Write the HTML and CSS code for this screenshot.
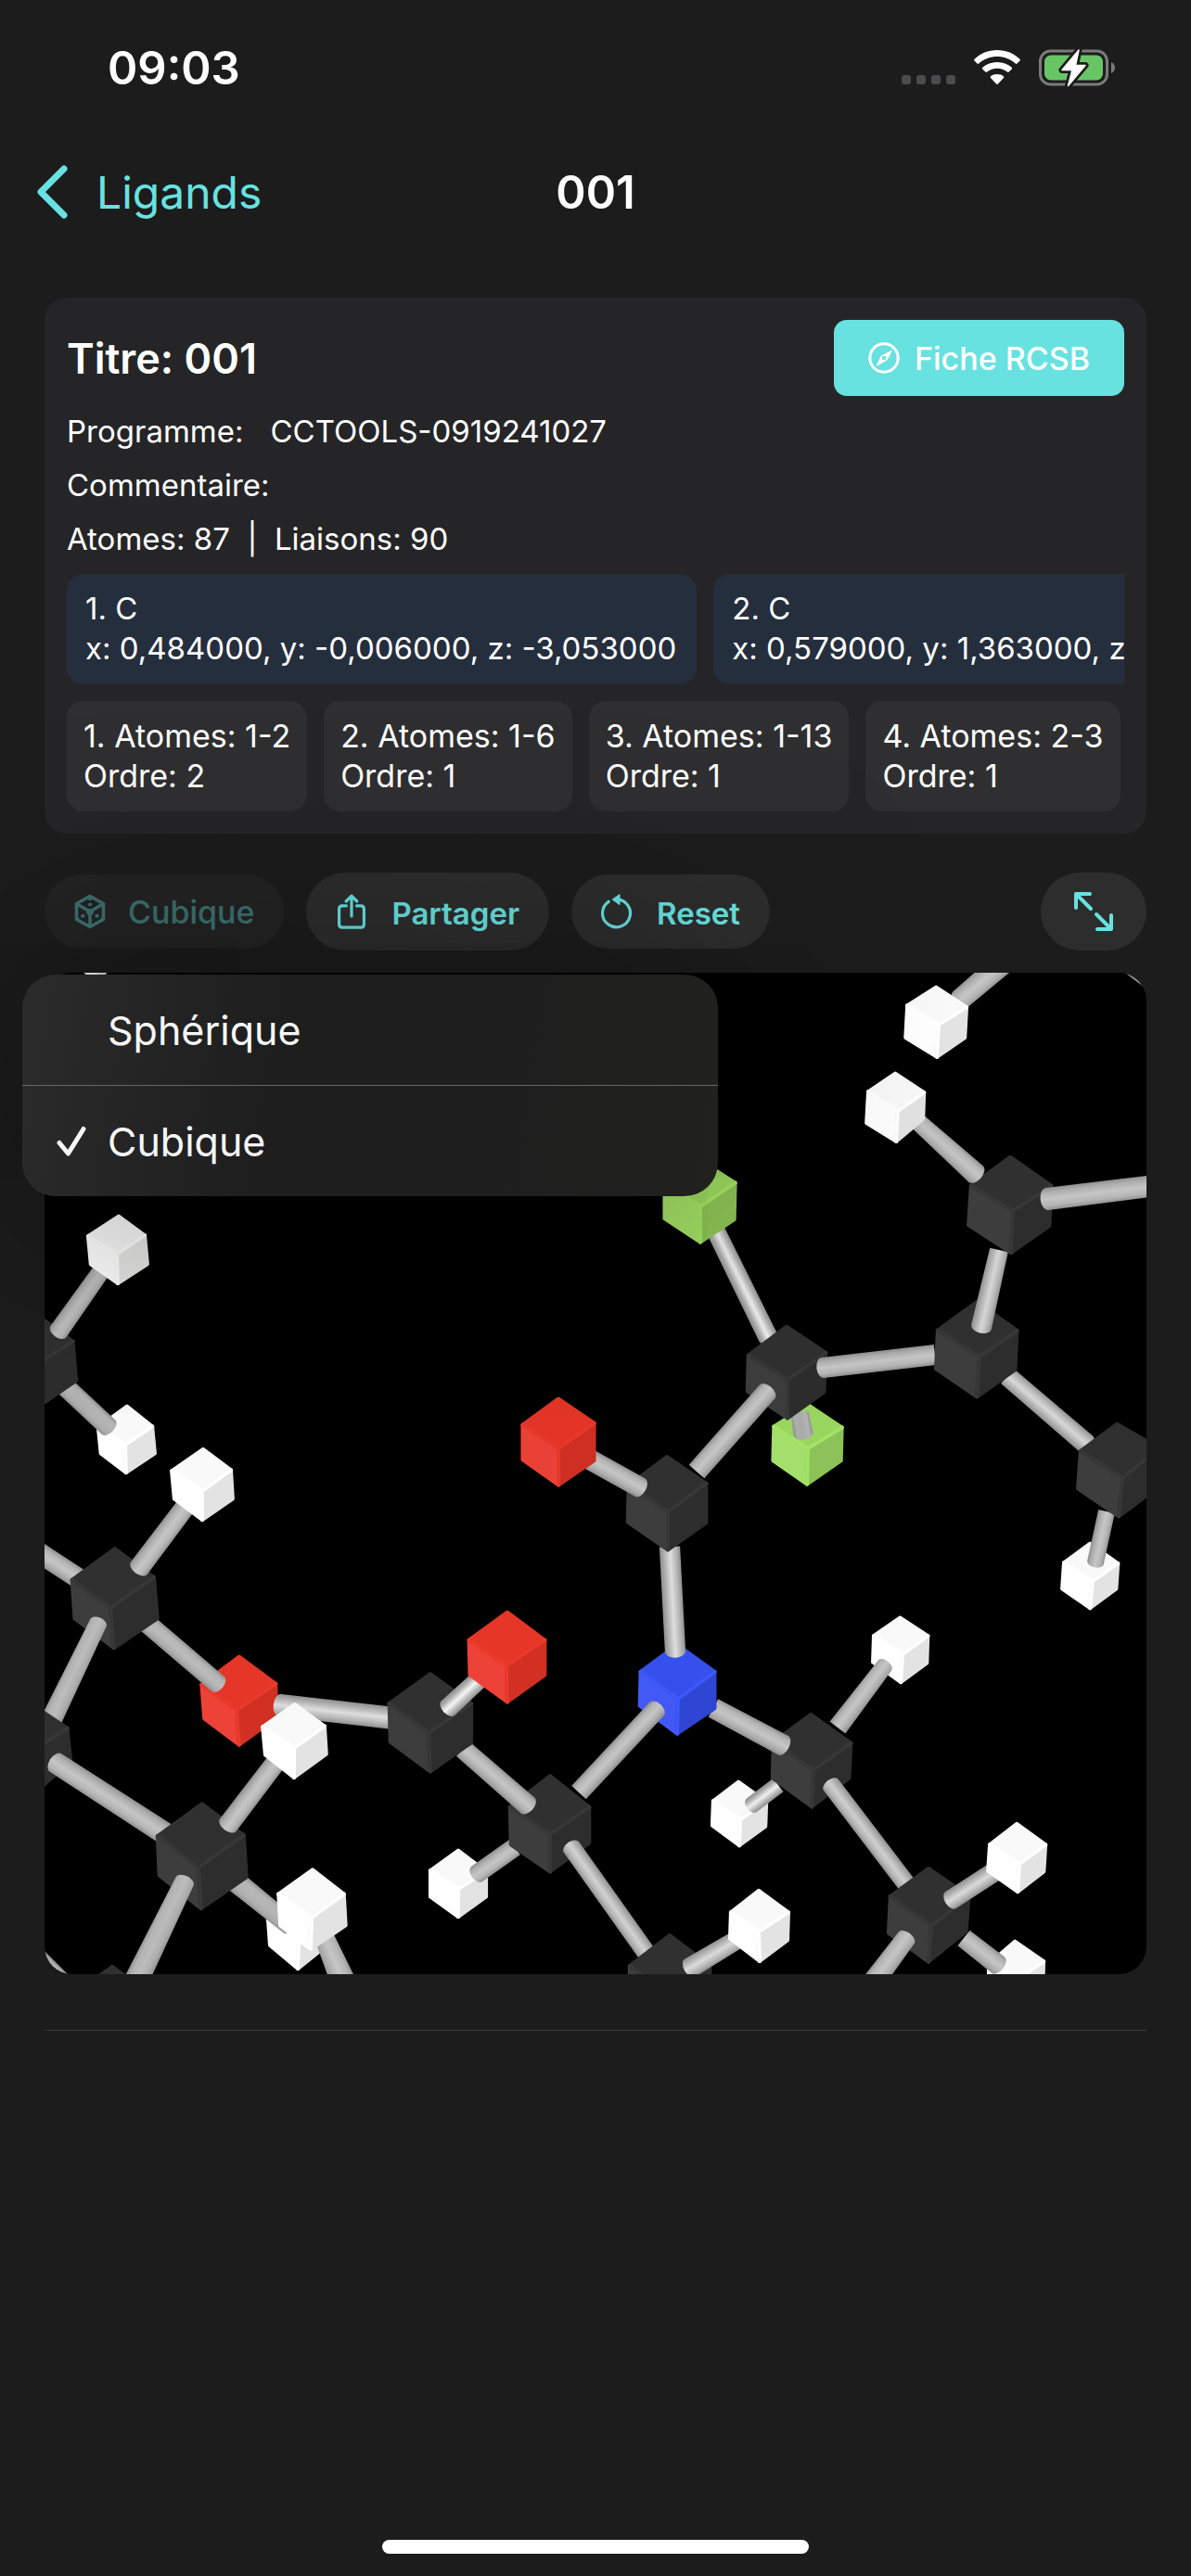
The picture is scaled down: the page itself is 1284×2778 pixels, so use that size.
FILE: index.html
```
<!DOCTYPE html>
<html lang="fr">
<head>
<meta charset="utf-8">
<meta name="viewport" content="width=device-width, initial-scale=1">
<title>001 – Ligands</title>
<link rel="stylesheet" href="styles.css">
</head>
<body>
<div class="status">
  <time class="status__time">09:03</time>
  <div class="status__icons">
    <svg class="status__signal" viewBox="0 0 58 10" aria-hidden="true" fill="#4c4c4e"><rect width="10" height="10" rx="3"/><rect x="16" width="10" height="10" rx="3"/><rect x="32" width="10" height="10" rx="3"/><rect x="48" width="10" height="10" rx="3"/></svg>
    <svg class="status__wifi" viewBox="0 0 50 38" aria-hidden="true" fill="#fff"><path d="M25 0C34.500 0 43.500 3.700 49.500 9.800Q50.300 10.700 49.500 11.500L46.500 14.500Q45.700 15.300 44.800 14.500C39.300 9.600 32.400 7 25 7S10.700 9.600 5.200 14.500Q4.300 15.300 3.500 14.500L.5 11.500Q-.3 10.700.5 9.800C6.500 3.700 15.500 0 25 0Z"/><path d="M25 13C31 13 36.500 15.200 40.700 18.800Q41.600 19.700 40.800 20.500L37.600 23.600Q36.800 24.400 35.900 23.600C32.900 21.100 29.100 19.800 25 19.800S17.100 21.100 14.100 23.600Q13.200 24.400 12.400 23.600L9.200 20.500Q8.400 19.700 9.300 18.800C13.500 15.200 19 13 25 13Z"/><path d="M25 26C27.700 26 30.100 26.900 31.900 28.300Q32.800 29.200 32 30L25.900 36.500Q25 37.400 24.100 36.500L18 30Q17.200 29.200 18.100 28.300C19.900 26.900 22.300 26 25 26Z"/></svg>
    <svg class="status__battery" viewBox="0 0 82 42" aria-hidden="true"><rect x="1.500" y="3" width="72" height="36" rx="11" fill="none" stroke="#7b7b7d" stroke-width="3"/><path d="M78 15Q82 17 82 21T78 27Z" fill="#7b7b7d"/><rect x="6" y="7.500" width="63" height="27" rx="7" fill="#67c566"/><path d="M43 2L25 23.500H36L31.500 40.500L50 18.500H39.500Z" fill="#fff" stroke="#1c1c1c" stroke-width="7" stroke-linejoin="round"/><path d="M43 2L25 23.500H36L31.500 40.500L50 18.500H39.500Z" fill="#fff" stroke="#fff" stroke-width="1.500" stroke-linejoin="round"/></svg>
  </div>
</div>

<header class="nav">
  <a class="nav__back" href="#ligands">
    <svg class="nav__chevron" viewBox="0 0 34 58" aria-hidden="true"><path d="M29 4L4 29L29 54" fill="none" stroke="currentColor" stroke-width="7" stroke-linecap="round" stroke-linejoin="round"/></svg>
    Ligands
  </a>
  <h1 class="nav__title">001</h1>
</header>

<main class="content">
  <section class="card">
    <div class="card__head">
      <h2 class="card__title">Titre: 001</h2>
      <button class="sheet-button" type="button">
        <svg class="sheet-button__icon" viewBox="0 0 34 34" aria-hidden="true"><circle cx="17" cy="17" r="15.200" fill="none" stroke="currentColor" stroke-width="3"/><path fill="currentColor" fill-rule="evenodd" d="M25.300 8.700Q26 8.400 25.600 9.400L21 18.500Q20.500 19.400 19.500 20L9.800 25.500Q8.700 25.900 9.100 24.800L13.300 15.800Q13.800 14.800 14.800 14.200ZM17 14.800A2.200 2.200 0 1 0 17 19.200A2.200 2.200 0 1 0 17 14.800Z"/></svg>
        Fiche RCSB
      </button>
    </div>
    <p class="card__row"><span>Programme:</span><span>CCTOOLS-0919241027</span></p>
    <p class="card__row">Commentaire:</p>
    <p class="card__row">Atomes: 87&nbsp; |&nbsp; Liaisons: 90</p>
    <ul class="chips chips--atoms">
      <li class="chip">1. C<br>x: 0,484000, y: -0,006000, z: -3,053000</li>
      <li class="chip">2. C<br>x: 0,579000, y: 1,363000, z: -2,410000</li>
    </ul>
    <ul class="chips chips--bonds">
      <li class="chip">1. Atomes: 1-2<br>Ordre: 2</li>
      <li class="chip">2. Atomes: 1-6<br>Ordre: 1</li>
      <li class="chip">3. Atomes: 1-13<br>Ordre: 1</li>
      <li class="chip">4. Atomes: 2-3<br>Ordre: 1</li>
    </ul>
  </section>

  <div class="toolbar">
    <button class="pill pill--open" type="button" aria-haspopup="menu" aria-expanded="true">
      <svg class="pill__icon" viewBox="0 0 34 38" aria-hidden="true" fill="none" stroke="currentColor" stroke-width="3.600" stroke-linejoin="round"><path d="M17 2.500L31.500 10.500V27.500L17 35.500L2.500 27.500V10.500Z"/><path d="M3 11L17 19L31 11M17 19V35"/><path d="M17 4V19" stroke-dasharray="3 3"/><path d="M17 19L4 27M17 19L30 27" stroke-dasharray="4 3"/></svg>
      <span>Cubique</span>
    </button>
    <button class="pill pill--strong pill--tall" type="button">
      <svg class="pill__icon" viewBox="0 0 34 38" aria-hidden="true" fill="none" stroke="currentColor" stroke-width="3.200" stroke-linecap="round" stroke-linejoin="round"><path d="M11.500 12.800H7Q3.600 12.800 3.600 16.200V32.800Q3.600 36.200 7 36.200H27Q30.400 36.200 30.400 32.800V16.200Q30.400 12.800 27 12.800H22.500"/><path d="M17 24V2.500M11.200 8L17 2.200L22.800 8"/></svg>
      <span class="pill__label">Partager</span>
    </button>
    <button class="pill pill--strong" type="button">
      <svg class="pill__icon" viewBox="0 0 34 38" aria-hidden="true"><path d="M8.200 8.300A15 15 0 1 0 17 5.800" fill="none" stroke="currentColor" stroke-width="3.200" stroke-linecap="round"/><path d="M19.800 1V11.200L12.600 6Z" fill="currentColor" stroke="currentColor" stroke-width="1.500" stroke-linejoin="round"/></svg>
      <span class="pill__label">Reset</span>
    </button>
    <button class="pill pill--tall pill--end" type="button" aria-label="Plein écran">
      <svg class="pill__expand" viewBox="0 0 44 44" aria-hidden="true" fill="none" stroke="currentColor" stroke-width="4" stroke-linecap="round" stroke-linejoin="round"><path d="M3 18V3H18M3.500 3.500L19 19M41 26V41H26M40.500 40.500L25 25"/></svg>
    </button>
  </div>

  <div class="viewer">
    <svg class="viewer__scene" id="scene" viewBox="48 1049 1188 1080" role="img" aria-label="Molécule 001 en représentation cubique"></svg>
    <div class="menu" role="menu">
      <button class="menu__item" type="button" role="menuitemradio" aria-checked="false"><span class="menu__check"></span>Sphérique</button>
      <button class="menu__item" type="button" role="menuitemradio" aria-checked="true"><span class="menu__check"><svg class="menu__tick" viewBox="0 0 32 34" aria-hidden="true"><path d="M3 18.500L12.500 30L29 3.500" fill="none" stroke="currentColor" stroke-width="5" stroke-linecap="round" stroke-linejoin="round"/></svg></span>Cubique</button>
    </div>
  </div>

  <hr class="rule">
</main>
<div class="home-indicator"></div>
<script src="molecule.js"></script>
</body>
</html>
```
FILE: styles.css
```
* { box-sizing: border-box; }

body {
  margin: 0;
  min-height: 100vh;
  display: flex;
  flex-direction: column;
  background: #1c1c1c;
  color: #fff;
  font-family: Inter, "Liberation Sans", sans-serif;
  font-size: 33px;
  overflow-x: hidden;
}

h1, h2, p, ul { margin: 0; padding: 0; }
ul { list-style: none; }
svg { display: block; flex: none; }
button { margin: 0; padding: 0; border: 0; font: inherit; color: inherit; background: none; }

.status {
  height: 146px;
  padding: 0 82px 0 116px;
  display: flex;
  align-items: center;
  justify-content: space-between;
}
.status__time { font-size: 49px; font-weight: 600; }
.status__icons { display: flex; align-items: center; gap: 20px; }
.status__signal { width: 58px; height: 10px; margin-top: 26px; }
.status__wifi { width: 50px; height: 38px; }
.status__battery { width: 82px; height: 42px; }

.nav {
  height: 122px;
  padding: 0 40px;
  display: grid;
  grid-template-columns: 1fr auto 1fr;
  align-items: center;
}
.nav__back {
  display: flex;
  align-items: center;
  gap: 30px;
  color: #68e2e0;
  font-size: 48px;
  text-decoration: none;
}
.nav__chevron { width: 34px; height: 58px; }
.nav__title { font-size: 49px; font-weight: 600; }

.content {
  padding: 53px 48px 0;
  display: flex;
  flex-direction: column;
}

.card {
  padding: 24px;
  border-radius: 24px;
  background: #252527;
  display: flex;
  flex-direction: column;
  gap: 18px;
}
.card__head { display: flex; align-items: center; justify-content: space-between; }
.card__title { font-size: 45px; font-weight: 600; }
.card__row { display: flex; gap: 29px; line-height: 40px; }

.sheet-button {
  height: 82px;
  padding: 0 37px;
  border-radius: 14px;
  display: flex;
  align-items: center;
  gap: 16px;
  background: #68e2e0;
  font-size: 34px;
  font-weight: 500;
}
.sheet-button__icon { width: 34px; height: 34px; }

.chips { display: flex; gap: 18px; overflow-x: auto; scrollbar-width: none; }
.chip {
  flex: none;
  padding: 16px 18px 17px;
  border-radius: 18px;
  line-height: 43px;
  white-space: nowrap;
}
.chips--atoms .chip { padding-left: 20px; padding-right: 22px; background: #252e3d; }
.chips--bonds .chip { background: #2f2f31; font-size: 34px; }

.toolbar {
  margin: 42px 0 24px;
  display: flex;
  align-items: center;
  gap: 24px;
}
.pill {
  height: 80px;
  padding: 0 32px;
  border-radius: 42px;
  display: flex;
  align-items: center;
  gap: 24px;
  background: #2d2d2e;
  color: #68e2e0;
  font-size: 34px;
  font-weight: 500;
}
.pill--open { opacity: .42; }
.pill--strong { gap: 26px; font-size: 33px; font-weight: 600; }
.pill--tall { height: 84px; }
.pill--end { margin-left: auto; padding: 0 35px; }
.pill__icon { width: 34px; height: 38px; }
.pill__label { padding-top: 4px; }
.pill__expand { width: 44px; height: 44px; }

.viewer { position: relative; }
.viewer__scene {
  width: 100%;
  height: auto;
  border-radius: 30px;
  background: #000;
}

.menu {
  position: absolute;
  top: 2px;
  left: -24px;
  width: 750px;
  border-radius: 36px;
  background: linear-gradient(100deg, #2b2b2b, #1e1e1e 36%, #1e1e1e 70%, #21211f);
  box-shadow: 0 0 240px rgba(0, 0, 0, .5);
}
.menu__item {
  width: 100%;
  height: 119px;
  padding-left: 34px;
  display: flex;
  align-items: center;
  color: #f7f7f7;
  font-size: 43px;
}
.menu__item + .menu__item { height: 120px; border-top: 1px solid #676767; }
.menu__check { width: 58px; padding-left: 3px; }
.menu__tick { width: 32px; height: 34px; }

.rule {
  width: 100%;
  height: 1px;
  margin: 60px 0 0;
  border: 0;
  background: #3a3a3b;
}

.home-indicator {
  width: 460px;
  height: 15px;
  margin: auto auto 24px;
  border-radius: 8px;
  background: #fff;
}
```
FILE: molecule.js
```
// Draws the ball-and-stick scene with cubes for atoms, from back to front.
const SVG = "http://www.w3.org/2000/svg";
const scene = document.getElementById("scene");

// Colours per element: top face, left face, right face, bevelled edge.
const SHADES = {
  H: ["#f9f9f9", "#fefefe", "#e3e3e3", "#ffffff"],
  h: ["#f9f9f9", "#ffffff", "#e3e3e3", "#ffffff"],
  d: ["#f9f9f9", "#ffffff", "#e6e6e4", "#ffffff"],
  C: ["#303030", "#3d3d3d", "#2d2d2d", "#373737"],
  O: ["#e63628", "#ed4238", "#d13023", "#e93a2c"],
  o: ["#e23527", "#ea4137", "#ce2f22", "#e6382a"],
  N: ["#3550ec", "#4259f5", "#2f45d3", "#3d58f8"],
  F: ["#99d65f", "#a3df6a", "#8cc258", "#a2e365"],
  f: ["#9ad75e", "#a4e067", "#8bc254", "#a2e363"]
};

// Radius of the drawn cylinders relative to the listed widths.
const THICKNESS = 1.06;

function add(name, attrs, parent = scene) {
  const node = document.createElementNS(SVG, name);
  for (const key in attrs) node.setAttribute(key, attrs[key]);
  parent.append(node);
  return node;
}

// Corners run clockwise from the top one; the last point is the near corner.
function cube(kind, ...p) {
  const [top, left, right, edge] = SHADES[kind];
  const at = i => p[2 * i] + " " + p[2 * i + 1];
  const cx = p[12], cy = p[13];
  const inset = i => (p[2 * i] + (cx - p[2 * i]) * 0.06) + " " + (p[2 * i + 1] + (cy - p[2 * i + 1]) * 0.06);
  const face = (fill, ids) => add("path", {
    d: "M" + ids.map(inset).join("L") + "L" + at(6) + "Z",
    fill, stroke: fill, "stroke-width": 4, "stroke-linejoin": "round"
  });
  face(top, [5, 0, 1]);
  face(left, [3, 4, 5]);
  face(right, [1, 2, 3]);
  add("path", {
    d: `M${inset(5)}L${at(6)}L${inset(1)}M${at(6)}L${inset(3)}`,
    fill: "none", stroke: edge, "stroke-width": 4, "stroke-linejoin": "round", "stroke-linecap": "round"
  });
}

const defs = add("defs", {});
let bondCount = 0;

// A cylinder from (x1, y1) to (x2, y2); the far end enters the front face of an atom.
function bond(x1, y1, w1, x2, y2, w2, peak = "#c6c6c6") {
  const len = Math.hypot(x2 - x1, y2 - y1);
  const ux = (x2 - x1) / len, uy = (y2 - y1) / len;
  const nx = -uy, ny = ux;
  const id = "bond" + bondCount++;
  const a = w1 * THICKNESS / 2, b = w2 * THICKNESS / 2;
  const w = Math.max(a, b);
  const grad = add("linearGradient", {
    id, gradientUnits: "userSpaceOnUse",
    x1: x1 + nx * w, y1: y1 + ny * w, x2: x1 - nx * w, y2: y1 - ny * w
  }, defs);
  [["0", "#8e8e8e"], [".2", "#adadad"], [".5", peak], [".8", "#b4b4b4"], ["1", "#8e8e8e"]]
    .forEach(([offset, color]) => add("stop", { offset, "stop-color": color }, grad));
  const angle = Math.atan2(uy, ux) * 180 / Math.PI;
  add("path", {
    d: `M${x1 + nx * a} ${y1 + ny * a}L${x2 + nx * b} ${y2 + ny * b}` +
       `A${b * 0.6} ${b} ${angle} 0 0 ${x2 - nx * b} ${y2 - ny * b}L${x1 - nx * a} ${y1 - ny * a}Z`,
    fill: `url(#${id})`
  });
}

// Upper right
bond(1103, 1020, 24, 1035, 1078, 22);
cube("h", 1009, 1062, 1044, 1085, 1042, 1120, 1010, 1142, 974, 1120, 976, 1083, 1012, 1105);
bond(1208, 1032, 20, 1258, 1070, 20);
bond(772, 1328, 19, 828, 1442, 20, "#f0f0f0");
bond(1086, 1484, 20, 1171, 1557, 21, "#d8d8d8");
cube("f", 754, 1248, 795, 1274, 794, 1316, 755, 1342, 714, 1315, 714, 1275, 755, 1301);
cube("F", 871, 1512, 910, 1538, 909, 1576, 870, 1603, 831, 1576, 832, 1537, 871, 1562);
bond(862, 1523, 18, 866, 1546, 20, "#aaaaaa");
cube("C", 848, 1427, 893, 1457, 891, 1502, 849, 1532, 803, 1501, 804, 1460, 849, 1488);
bond(1008, 1461, 21, 887, 1475, 21);
cube("C", 1053, 1400, 1099, 1433, 1097, 1478, 1053, 1509, 1006, 1477, 1008, 1433, 1056, 1463);
bond(1077, 1348, 19, 1058, 1431, 21, "#d6d6d6");
cube("C", 1089, 1244, 1136, 1277, 1134, 1323, 1090, 1354, 1041, 1322, 1044, 1277, 1092, 1306);
bond(1250, 1278, 22, 1129, 1293, 23);
bond(990, 1210, 18, 1052, 1266, 22);
cube("h", 965, 1155, 998, 1177, 997, 1207, 966, 1233, 932, 1212, 934, 1176, 968, 1198);
cube("H", 1175, 1662, 1207, 1685, 1205, 1714, 1175, 1736, 1143, 1714, 1145, 1684, 1178, 1705);
bond(1193, 1630, 17, 1181, 1685, 17);
cube("C", 1204, 1532, 1252, 1560, 1250, 1605, 1206, 1638, 1159, 1606, 1162, 1563, 1210, 1594);

// Centre and lower right
cube("H", 970, 1742, 1002, 1763, 1001, 1794, 971, 1816, 939, 1793, 940, 1763, 973, 1784);
bond(903, 1863, 20, 954, 1796, 17);
cube("H", 796, 1919, 828, 1942, 827, 1970, 797, 1992, 766, 1969, 767, 1941, 798, 1962);
bond(839, 1925, 17, 810, 1947, 17, "#f0f0f0");
cube("C", 874, 1845, 920, 1878, 918, 1918, 875, 1951, 830, 1918, 831, 1877, 877, 1909);
bond(769, 1842, 21, 844, 1882, 22);
cube("N", 730, 1770, 773, 1801, 773, 1843, 730, 1872, 687, 1840, 688, 1801, 731, 1832);
bond(624, 1933, 20, 708, 1843, 20);
bond(722, 1668, 21, 728, 1781, 21, "#dedede");
bond(751, 1587, 21, 827, 1501, 21);
cube("C", 719, 1567, 764, 1598, 764, 1643, 720, 1674, 674, 1642, 675, 1600, 720, 1630);
bond(636, 1574, 21, 690, 1604, 21);
cube("o", 602, 1505, 643, 1533, 643, 1576, 602, 1604, 561, 1575, 561, 1535, 602, 1562);
cube("H", 494, 1993, 526, 2017, 526, 2046, 494, 2069, 462, 2046, 462, 2016, 494, 2037);
bond(555, 1992, 19, 514, 2021, 19);
cube("C", 593, 1911, 638, 1947, 638, 1988, 593, 2021, 548, 1990, 547, 1947, 593, 1978);
cube("H", 1094, 2091, 1127, 2114, 1126, 2146, 1095, 2168, 1064, 2146, 1064, 2117, 1096, 2135);
bond(1039, 2090, 20, 1076, 2119, 21);
bond(979, 2034, 19, 896, 1925, 19, "#cfcfcf");
cube("C", 1001, 2011, 1047, 2043, 1044, 2083, 1001, 2118, 955, 2085, 957, 2043, 1004, 2077);
bond(930, 2153, 23, 977, 2090, 20);
bond(1073, 2018, 20, 1025, 2049, 20, "#dadada");
cube("H", 1096, 1964, 1129, 1988, 1127, 2019, 1097, 2042, 1063, 2018, 1065, 1988, 1099, 2010);
bond(699, 2109, 19, 616, 1992, 19, "#d2d2d2");
cube("C", 722, 2083, 768, 2118, 768, 2165, 722, 2195, 675, 2165, 676, 2118, 723, 2152);
bond(796, 2091, 19, 744, 2122, 21, "#dadada");
cube("H", 818, 2036, 852, 2061, 851, 2093, 819, 2117, 785, 2091, 786, 2061, 818, 2083);

// Left side
cube("O", 258, 1783, 300, 1814, 301, 1853, 258, 1884, 218, 1854, 215, 1815, 255, 1844);
bond(425, 1853, 23, 302, 1839, 23, "#dedede");
bond(499, 1886, 20, 569, 1947, 21);
cube("C", 464, 1801, 511, 1835, 511, 1880, 464, 1913, 418, 1879, 417, 1835, 462, 1869);
bond(522, 1806, 19, 483, 1842, 20, "#f6f6f6");
cube("O", 547, 1735, 590, 1767, 590, 1807, 547, 1838, 504, 1807, 503, 1767, 546, 1796);
bond(159, 1751, 20, 235, 1816, 20, "#bcbcbc");
bond(20, 1660, 21, 89, 1705, 21);
cube("C", 124, 1666, 169, 1699, 173, 1746, 123, 1780, 78, 1746, 75, 1702, 119, 1734);
bond(47, 1872, 22, 106, 1750, 18, "#bcbcbc");
bond(202, 1622, 20, 150, 1691, 21);
cube("H", 219, 1560, 251, 1584, 253, 1617, 218, 1641, 186, 1617, 183, 1585, 218, 1608);
cube("C", 30, 1832, 75, 1862, 79, 1900, 35, 1938, -8, 1905, -10, 1865, 33, 1890);
bond(179, 1978, 23, 60, 1901, 22);
cube("H", 321, 2047, 355, 2070, 356, 2097, 321, 2125, 289, 2098, 287, 2070, 322, 2093);
bond(254, 2029, 22, 312, 2076, 20, "#b6b6b6");
cube("C", 121, 2117, 166, 2150, 166, 2190, 121, 2220, 76, 2190, 76, 2150, 121, 2180);
cube("C", 218, 1941, 266, 1977, 269, 2025, 217, 2061, 169, 2023, 167, 1978, 214, 2014);
bond(144, 2142, 25, 199, 2029, 20, "#bcbcbc");
bond(300, 1897, 20, 246, 1968, 21);
cube("H", 318, 1835, 352, 1860, 354, 1892, 317, 1919, 284, 1893, 281, 1861, 317, 1885);
bond(350, 2090, 20, 372, 2142, 26);
cube("H", 337, 2013, 373, 2041, 375, 2077, 335, 2104, 300, 2077, 298, 2041, 336, 2068);
cube("H", 137, 1514, 166, 1537, 169, 1568, 136, 1590, 107, 1568, 104, 1538, 135, 1558);
bond(70, 1495, 20, 117, 1539, 20, "#b4b4b4");
cube("C", 40, 1415, 81, 1445, 85, 1490, 41, 1520, -2, 1490, -8, 1447, 39, 1472);
bond(111, 1368, 18, 63, 1436, 20, "#c0c0c0");
cube("d", 128, 1309, 158, 1331, 161, 1364, 127, 1386, 96, 1364, 93, 1332, 126, 1352);

// Fragments cut by the frame
bond(36, 2104, 16, 74, 2142, 16);
cube("H", 103, 1012, 118, 1024, 118, 1046, 103, 1058, 88, 1046, 88, 1024, 103, 1036);
```
